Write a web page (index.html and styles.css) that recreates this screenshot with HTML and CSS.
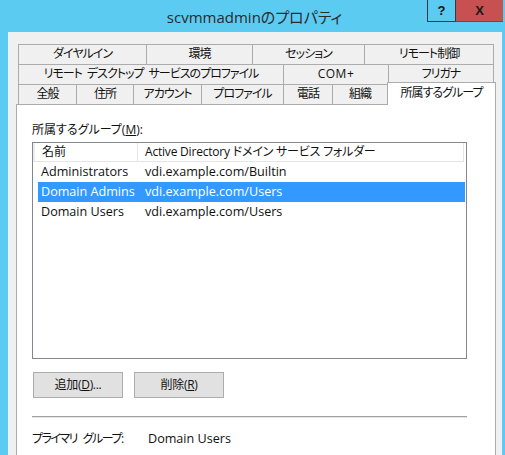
FILE: index.html
```html
<!DOCTYPE html>
<html lang="ja">
<head>
<meta charset="utf-8">
<title>scvmmadminのプロパティ</title>
<link rel="stylesheet" href="styles.css">
</head>
<body>
<div class="window">
  <div class="titlebar">
    <div class="title">scvmmadminのプロパティ</div>
    <div class="controls">
      <div class="btn-help">?</div>
      <div class="btn-close">X</div>
    </div>
  </div>
  <div class="client">
    <div class="tabs">
      <div class="tabrow">
        <div class="tab w129">ダイヤルイン</div>
        <div class="tab w107">環境</div>
        <div class="tab w113">セッション</div>
        <div class="tab w130">リモート制御</div>
      </div>
      <div class="tabrow">
        <div class="tab w266">リモート デスクトップ サービスのプロファイル</div>
        <div class="tab tab-latin w106">COM+</div>
        <div class="tab w106">フリガナ</div>
      </div>
      <div class="tabrow">
        <div class="tab w59">全般</div>
        <div class="tab w58">住所</div>
        <div class="tab w69">アカウント</div>
        <div class="tab w83">プロファイル</div>
        <div class="tab w50">電話</div>
        <div class="tab w56">組織</div>
        <div class="tab tab-selected w109">所属するグループ</div>
      </div>
    </div>
    <div class="panel">
      <div class="label">所属するグループ(<u>M</u>):</div>
      <div class="listview">
        <div class="lv-header">
          <div class="lv-hcell lv-hcell-name">名前</div>
          <div class="lv-hcell lv-hcell-folder">Active Directory ドメイン サービス フォルダー</div>
        </div>
        <div class="lv-row">
          <div class="lv-cell">Administrators</div>
          <div class="lv-cell">vdi.example.com/Builtin</div>
        </div>
        <div class="lv-row lv-row-selected">
          <div class="lv-cell">Domain Admins</div>
          <div class="lv-cell">vdi.example.com/Users</div>
        </div>
        <div class="lv-row">
          <div class="lv-cell">Domain Users</div>
          <div class="lv-cell">vdi.example.com/Users</div>
        </div>
      </div>
      <div class="buttons">
        <div class="button">追加(<u>D</u>)...</div>
        <div class="button">削除(<u>R</u>)</div>
      </div>
      <div class="separator"></div>
      <div class="primary">
        <div class="primary-label">プライマリ グループ:</div>
        <div class="primary-value">Domain Users</div>
      </div>
    </div>
  </div>
</div>
</body>
</html>
```

FILE: styles.css
```css
* {
  box-sizing: border-box;
}

html, body {
  margin: 0;
  padding: 0;
}

body {
  font-family: "Open Sans", "Noto Sans CJK JP", sans-serif;
  font-size: 12px;
  font-feature-settings: "palt";
  color: #111;
  background: #5ccbf1;
}

.window {
  width: 505px;
  height: 455px;
  overflow: hidden;
  background: #5ccbf1;
  display: flex;
  flex-direction: column;
}

.titlebar {
  height: 32px;
  flex: none;
  display: grid;
  grid-template-columns: 1fr;
}

.title {
  grid-area: 1 / 1;
  text-align: center;
  font-size: 15px;
  line-height: 34px;
  color: #2a2a2a;
  padding-left: 4px;
}

.controls {
  grid-area: 1 / 1;
  justify-self: end;
  align-self: start;
  display: flex;
  margin-right: 2px;
}

.btn-help {
  width: 28px;
  height: 22px;
  border: 1px solid #3a3a3a;
  border-top: none;
  border-right: none;
  text-align: center;
  font-family: "Liberation Sans", sans-serif;
  font-weight: bold;
  font-size: 13px;
  line-height: 21px;
  color: #111;
}

.btn-close {
  width: 48px;
  height: 22px;
  background: #c75050;
  border-left: 1px solid #3a3a3a;
  border-bottom: 1px solid #8c3a3a;
  text-align: center;
  font-family: "Liberation Sans", sans-serif;
  font-weight: bold;
  font-size: 13px;
  line-height: 21px;
  color: #1a1a1a;
}

.client {
  flex: 1;
  margin: 0 3px 0 8px;
  background: #f0f0f0;
  padding: 12px 6px 0 8px;
  display: flex;
  flex-direction: column;
  min-height: 0;
}

.tabs {
  padding-left: 2px;
  flex: none;
}

.tabrow {
  display: flex;
  height: 20px;
}

.tab {
  height: 20px;
  margin-right: -1px;
  border: 1px solid #acacac;
  border-bottom: none;
  background: #f0f0f0;
  text-align: center;
  line-height: 18px;
  white-space: nowrap;
  letter-spacing: -1px;
  word-spacing: 3px;
}

.tab-latin {
  letter-spacing: 0.5px;
}

.tab-selected {
  height: 23px;
  margin-top: -2px;
  background: #fff;
  position: relative;
  z-index: 1;
  line-height: 20px;
}

.w50 { width: 50px; }
.w56 { width: 56px; }
.w58 { width: 58px; }
.w59 { width: 59px; }
.w69 { width: 69px; }
.w83 { width: 83px; }
.w106 { width: 106px; }
.w107 { width: 107px; }
.w109 { width: 109px; }
.w113 { width: 113px; }
.w129 { width: 129px; }
.w130 { width: 130px; }
.w266 { width: 266px; }

.panel {
  flex: 1;
  background: #fff;
  border: 1px solid #acacac;
  border-bottom: none;
  padding: 17px 28px 0 15px;
}

.label {
  line-height: 16px;
  margin-bottom: 4px;
}

.listview {
  height: 217px;
  border: 1px solid #828790;
  background: #fff;
}

.lv-header {
  display: flex;
  height: 19px;
}

.lv-hcell {
  line-height: 18px;
  border-right: 1px solid #e5e5e5;
  border-bottom: 1px solid #e5e5e5;
  white-space: nowrap;
}

.lv-hcell-name {
  width: 105px;
  padding-left: 7px;
  border-left: 2px solid #ececec;
}

.lv-hcell-folder {
  width: 326px;
  padding-left: 7px;
  letter-spacing: -0.2px;
}

.lv-row {
  display: grid;
  grid-template-columns: 104px 1fr;
  height: 20px;
  margin: 0 1px 0 5px;
  line-height: 20px;
  font-size: 12.6px;
}

.lv-cell {
  padding-left: 3px;
  white-space: nowrap;
}

.lv-row-selected {
  background: #3399ff;
  color: #fff;
}

.buttons {
  display: flex;
  gap: 11px;
  margin: 13px 0 0 1px;
}

.button {
  width: 90px;
  height: 26px;
  border: 1px solid #acacac;
  background: #e1e1e1;
  text-align: center;
  line-height: 24px;
  letter-spacing: -0.3px;
}

.separator {
  width: 435px;
  margin-top: 18px;
  border-top: 1px solid #a0a0a0;
  border-bottom: 1px solid #e6e6e6;
}

.primary {
  display: grid;
  grid-template-columns: 116px 1fr;
  margin-top: 13px;
  line-height: 16px;
}

.primary-label {
  letter-spacing: -1.5px;
  word-spacing: 4px;
  white-space: nowrap;
}

.primary-value {
  font-size: 12.6px;
}
```
